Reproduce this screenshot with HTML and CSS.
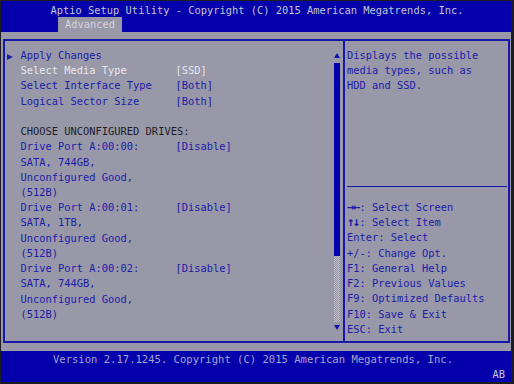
FILE: index.html
```html
<!DOCTYPE html>
<html>
<head>
<meta charset="utf-8">
<link rel="stylesheet" href="styles.css">
</head>
<body>
<div class="screen">
  <header class="top">
    <div class="title">Aptio Setup Utility - Copyright (C) 2015 American Megatrends, Inc.</div>
    <div class="tabs"><span class="tab">Advanced</span></div>
  </header>
  <main class="body">
    <div class="frame">
      <div class="left">
        <div class="row link"><span class="arrow"></span>Apply Changes</div>
        <div class="row sel"><span class="lbl">Select Media Type</span>[SSD]</div>
        <div class="row"><span class="lbl">Select Interface Type</span>[Both]</div>
        <div class="row"><span class="lbl">Logical Sector Size</span>[Both]</div>
        <div class="row">&nbsp;</div>
        <div class="row dark">CHOOSE UNCONFIGURED DRIVES:</div>
        <div class="row"><span class="lbl">Drive Port A:00:00:</span>[Disable]</div>
        <div class="row">SATA, 744GB,</div>
        <div class="row">Unconfigured Good,</div>
        <div class="row">(512B)</div>
        <div class="row"><span class="lbl">Drive Port A:00:01:</span>[Disable]</div>
        <div class="row">SATA, 1TB,</div>
        <div class="row">Unconfigured Good,</div>
        <div class="row">(512B)</div>
        <div class="row"><span class="lbl">Drive Port A:00:02:</span>[Disable]</div>
        <div class="row">SATA, 744GB,</div>
        <div class="row">Unconfigured Good,</div>
        <div class="row">(512B)</div>
      </div>
      <div class="scroll">
        <div class="up"></div>
        <div class="thumb"></div>
        <div class="track"></div>
        <div class="down"></div>
      </div>
      <div class="right">
        <div class="help">
          <div class="row">Displays the possible</div>
          <div class="row">media types, such as</div>
          <div class="row">HDD and SSD.</div>
        </div>
        <div class="keys">
          <div class="sep"></div>
          <div class="row"><span class="arr">&#8594;&#8592;</span>: Select Screen</div>
          <div class="row"><span class="arr">&#8593;&#8595;</span>: Select Item</div>
          <div class="row">Enter: Select</div>
          <div class="row">+/-: Change Opt.</div>
          <div class="row">F1: General Help</div>
          <div class="row">F2: Previous Values</div>
          <div class="row">F9: Optimized Defaults</div>
          <div class="row">F10: Save &amp; Exit</div>
          <div class="row">ESC: Exit</div>
        </div>
      </div>
    </div>
  </main>
  <footer class="bottom">
    <div class="ver">Version 2.17.1245. Copyright (C) 2015 American Megatrends, Inc.</div>
    <div class="ab">AB</div>
  </footer>
</div>
</body>
</html>
```
FILE: styles.css
```css
html, body {
  margin: 0;
  padding: 0;
  background: #1c1c22;
}
body {
  width: 514px;
  height: 384px;
  overflow: hidden;
  font-family: "DejaVu Sans Mono", "Liberation Mono", monospace;
  font-size: 10.4px;
}
.screen {
  margin: 1px 3px 2px 1px;
  width: 510px;
  height: 381px;
  display: flex;
  flex-direction: column;
  background: #9898a8;
}
.top {
  background: #0400ac;
  height: 31px;
  display: flex;
  flex-direction: column;
}
.title {
  color: #c4c4d0;
  text-align: center;
  line-height: 15px;
  padding-top: 2px;
  padding-left: 2px;
}
.tabs {
  padding-left: 57px;
  display: flex;
  margin-top: -1px;
}
.tab {
  background: #9898a8;
  color: #d4d4dc;
  height: 15px;
  line-height: 15px;
  padding: 0 7px;
}
.body {
  flex: 1;
  padding: 7px 1px 8px 2px;
  display: flex;
}
.frame {
  flex: 1;
  border: 2px solid #1818a8;
  display: flex;
}
.left {
  width: 329px;
  padding-top: 7px;
  color: #1c1ca8;
}
.row {
  height: 15.22px;
  line-height: 15.22px;
  white-space: pre;
}
.left .row {
  padding-left: 15.5px;
}
.arrow {
  display: inline-block;
  width: 0;
  height: 0;
  border-top: 3.5px solid transparent;
  border-bottom: 3.5px solid transparent;
  border-left: 6px solid #1c1ca8;
  margin-left: -13.5px;
  margin-right: 7.5px;
  vertical-align: -0.5px;
}
.lbl {
  display: inline-block;
  width: 155px;
}
.sel {
  color: #e6e6ee;
}
.dark {
  color: #1c1c26;
}
.scroll {
  width: 6px;
  margin-right: 3px;
  display: flex;
  flex-direction: column;
}
.up {
  width: 0;
  height: 0;
  border-left: 3px solid transparent;
  border-right: 3px solid transparent;
  border-bottom: 5px solid #1414a8;
  margin-top: 12px;
}
.thumb {
  background: #0400ac;
  height: 193px;
  margin-top: 5px;
}
.track {
  height: 66px;
  background-color: #a4a4b4;
  background-image: repeating-conic-gradient(#c0c0cc 0 25%, #9494a6 0 50%);
  background-size: 2px 2px;
}
.down {
  width: 0;
  height: 0;
  border-left: 3px solid transparent;
  border-right: 3px solid transparent;
  border-top: 5px solid #1414a8;
  margin-top: 3px;
}
.right {
  flex: 1;
  border-left: 2px solid #1818a8;
  padding: 7px 1px 0 2px;
  color: #1c1ca8;
  display: flex;
  flex-direction: column;
}
.help {
  height: 137px;
}
.sep {
  height: 1px;
  background: #1818a8;
  margin: 1px 0 13px 0;
  width: 160px;
}
.arr {
  display: inline-block;
  width: 12.5px;
  font-size: 12.5px;
  font-weight: bold;
  letter-spacing: -1.8px;
  line-height: 10px;
}
.bottom {
  background: #0400ac;
  height: 31px;
  display: flex;
  flex-direction: column;
}
.ver {
  color: #a4a4d0;
  text-align: center;
  line-height: 15px;
  padding-top: 1px;
  padding-right: 6px;
  font-size: 10.55px;
}
.ab {
  color: #c8c8dc;
  text-align: right;
  line-height: 15px;
  padding-right: 6px;
}
```
